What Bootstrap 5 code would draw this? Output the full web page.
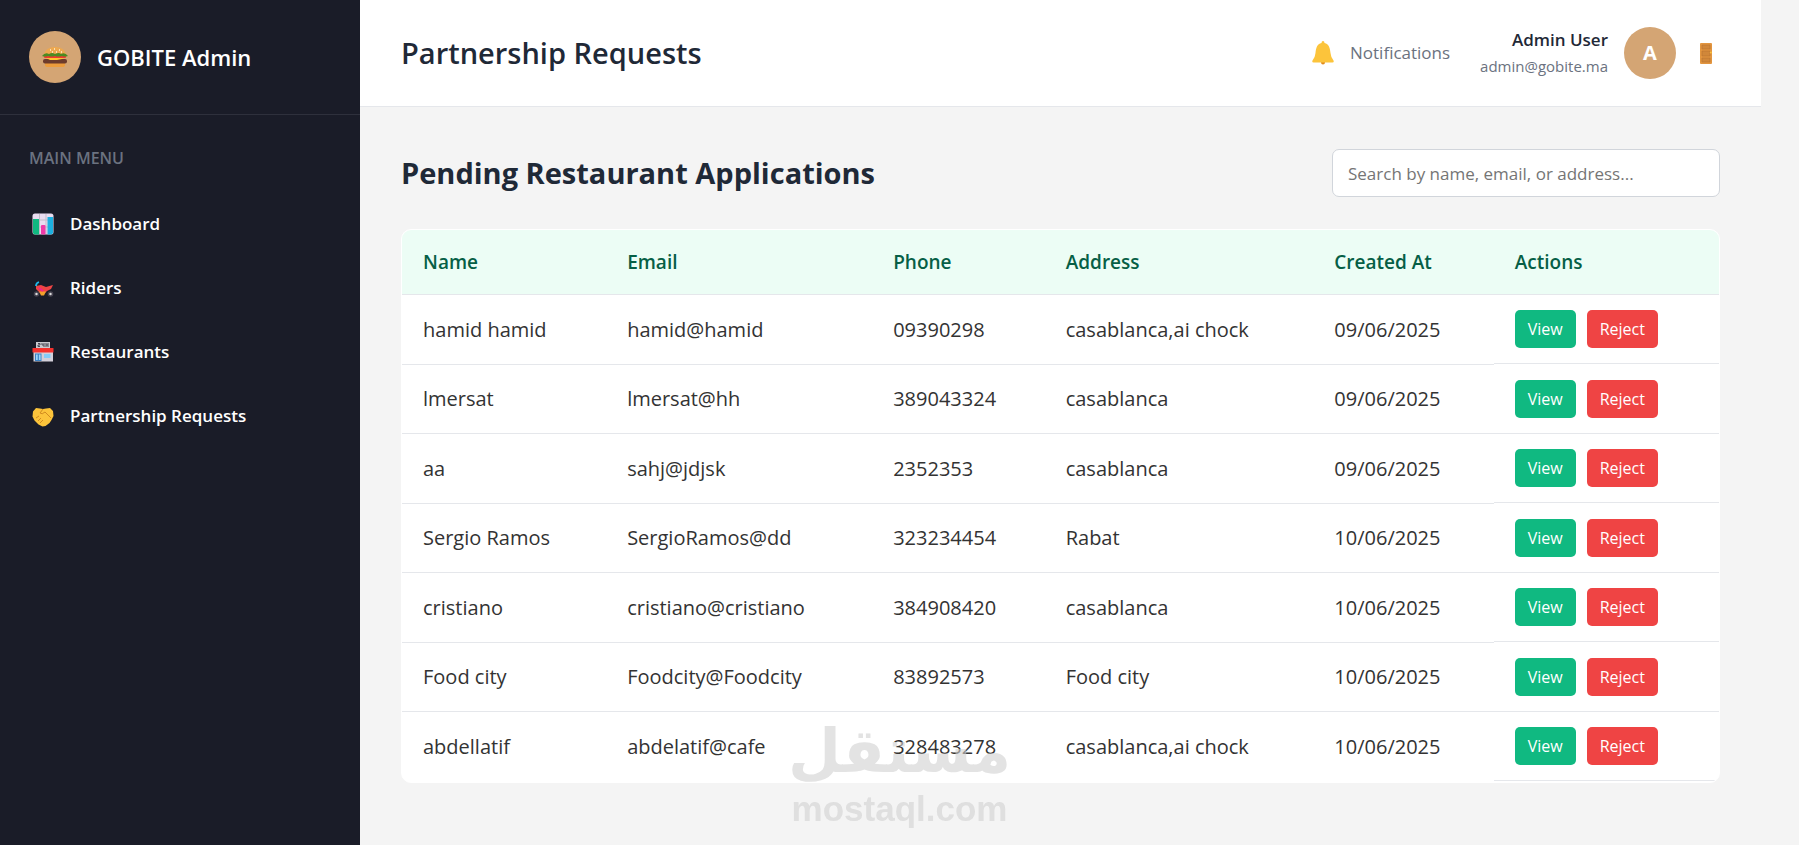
<!DOCTYPE html>
<html lang="en">
<head>
<meta charset="utf-8">
<meta name="viewport" content="width=device-width, initial-scale=1">
<title>GOBITE Admin - Partnership Requests</title>
<link href="https://cdn.jsdelivr.net/npm/bootstrap@5.3.0/dist/css/bootstrap.min.css" rel="stylesheet">
<style>
  body { font-family: "Open Sans", "Noto Sans", sans-serif; background: #f4f4f4; color: #333; }
  .sidebar { width: 360px; background: #1a1c28; color: #fff; }
  .brand { height: 115px; padding: 0 29px; border-bottom: 1px solid #2e303c; font-size: 22px; }
  .disc { width: 52px; height: 52px; background: #d4a574; font-size: 20px; }
  .menu-label { padding: 32px 29px 23px; font-size: 16px; line-height: 22px; color: #6b7280; }
  .menu a { height: 64px; padding: 0 32px; gap: 16px; font-size: 17px; color: #fff; }
  .main-area { padding-right: 38px; }
  .topbar { height: 107px; padding: 0 41px; background: #fff; border-bottom: 1px solid #e5e7eb; color: #1f2937; }
  .topbar h1 { font-size: 29px; }
  .account { gap: 30px; }
  .bell-btn { gap: 16px; font-size: 17px; color: #6b7280; }
  .user-name { font-size: 17px; line-height: 26px; }
  .user-mail { font-size: 15px; line-height: 26px; color: #6b7280; }
  .content { padding: 42px 41px; }
  .content h2 { font-size: 29px; color: #1f2937; }
  .search { width: 388px; height: 48px; padding: 0 15px; font-size: 17px; border: 1px solid #d1d5db; border-radius: 7px; }
  .search::placeholder { color: #757575; }
  .panel { margin-top: 32px; border: 1px solid #fff; border-radius: 10px; background: #fff; overflow: hidden; }
  .requests { table-layout: fixed; border-collapse: separate; border-spacing: 0; font-size: 20px; }
  .requests th { height: 65px; padding: 0 21px; background: #ecfdf5; color: #065f46; font-size: 19px; font-weight: 600; border-bottom: 1px solid #e5e7eb; }
  .requests td { height: 69px; padding: 0 21px; border-bottom: 1px solid #e5e7eb; }
  .requests tbody tr:nth-child(odd) td { height: 70px; }
  .requests td.actions { padding: 0; border: 0; vertical-align: top; }
  .requests tbody tr:last-child td { border-bottom: 0; }
  .action-row { height: 69px; padding: 0 21px; gap: 11px; border-bottom: 1px solid #e5e7eb; }
  .act { height: 38px; padding: 0 13px; border: 0; border-radius: 5px; font-size: 16px; color: #fff; }
  .act-view { background: #10b981; }
  .act-reject { background: #ef4444; }
  .c-name { width: 15.5%; } .c-mail { width: 20.2%; } .c-phone { width: 13.1%; }
  .c-addr { width: 20.4%; } .c-date { width: 13.7%; } .c-act { width: 17.1%; }
  .watermark { position: fixed; left: 50%; bottom: 16px; transform: translateX(-50%); color: #d0d0d0; opacity: .6; pointer-events: none; }
  .watermark .ar { font: bold 61px/76px "DejaVu Sans", sans-serif; }
  .watermark .en { font: bold 35px/40px "Liberation Sans", sans-serif; }
</style>
</head>
<body>
<div class="d-flex min-vh-100">
  <aside class="sidebar flex-shrink-0">
    <div class="brand d-flex align-items-center fw-semibold">
      <span class="disc rounded-circle d-flex align-items-center justify-content-center me-3">
        <svg width="26" height="22" viewBox="0 0 26 22" aria-hidden="true">
          <path d="M2 9C3 3 8 1 13 1s10 2 11 8z" fill="#eda850"/>
          <path d="M8 4h1M12 3h1M17 4h1M10 6h1M14 6h1M19 6h1" stroke="#fff1d0" stroke-width="1.3"/>
          <path d="M3 17h20v2q0 2-3 2H6q-3 0-3-2z" fill="#ec9c3c"/>
          <rect x="1" y="13" width="24" height="4.5" rx="2" fill="#6d3b2b"/>
          <path d="M2 11h22l-4 2-5 1-7 0z" fill="#ffc52f"/>
          <rect x="2" y="9.500" width="22" height="2.500" rx="1" fill="#f03a2e"/>
          <path d="M0 10q3-4 7-2 3-2 6 0 4-2 6 0 4-2 7 2-4 1-6 0-4 1-7 0-4 1-7 0-3 1-6 0z" fill="#4b8b22"/>
        </svg>
      </span>
      <span>GOBITE Admin</span>
    </div>
    <div class="menu-label fw-semibold">MAIN MENU</div>
    <nav class="menu d-flex flex-column fw-semibold">
      <a href="#" class="d-flex align-items-center text-decoration-none">
        <svg width="22" height="22" viewBox="0 0 22 22" aria-hidden="true"><rect x=".5" y=".5" width="21" height="21" rx="2.500" fill="#e9dcf0"/><path d="M7.500 1v20M14 1v20M1 7h20M1 14h20" stroke="#c3bcc9"/><path d="M1 6h6v15.500H3q-2 0-2-2z" fill="#10b981"/><rect x="9" y="12" width="4.500" height="9.500" rx="1" fill="#f03aa8"/><path d="M15.500 4h5.500v15.500q0 2-2 2h-3.500z" fill="#1cb0e0"/></svg>
        <span>Dashboard</span></a>
      <a href="#" class="d-flex align-items-center text-decoration-none">
        <svg width="22" height="22" viewBox="0 0 22 22" aria-hidden="true"><g transform="translate(0 3)"><circle cx="4.500" cy="14" r="2" fill="#ddd" stroke="#45424f" stroke-width="1.600"/><circle cx="18.500" cy="14" r="2" fill="#ddd" stroke="#45424f" stroke-width="1.600"/><path d="M4 6l5-1 5 2 7-2-2 4-4 2-2 2H8L4 9z" fill="#ef4444"/><path d="M7 11.500h7l-2 4H9z" fill="#f2a02b"/><path d="M7 8l4 3" stroke="#f0248c" stroke-width="2"/><path d="M4 6q0-3 3-4" fill="none" stroke="#20b8e6" stroke-width="1.800"/></g></svg>
        <span>Riders</span></a>
      <a href="#" class="d-flex align-items-center text-decoration-none">
        <svg width="22" height="22" viewBox="0 0 22 22" aria-hidden="true"><rect x="4" y="1" width="14" height="6" fill="#c9c9cf"/><path d="M6 2.500h2v1.500H6v1.500h2M10 2v2h2M12 2v4M14 2v4M14 4h2M16 2v4" fill="none" stroke="#4a4a56"/><rect x="1.500" y="9" width="19.500" height="11.500" fill="#d3d0da"/><rect x=".5" y="7" width="21" height="4.500" rx=".5" fill="#f5312d"/><rect x="3" y="12.500" width="6.500" height="7.500" fill="#3b82c4"/><path d="M4 13.500h1.700v5.500H4zM6.900 13.500h1.700v5.500H6.900z" fill="#9ad4fa"/><rect x="12" y="13" width="6.500" height="4" fill="#84cdfa"/></svg>
        <span>Restaurants</span></a>
      <a href="#" class="d-flex align-items-center text-decoration-none">
        <svg width="22" height="22" viewBox="0 0 22 22" aria-hidden="true"><g transform="translate(0 2)"><path d="M4 1l4 .5 3 .5 3-.5 4-.5 3 3 .5 5-2 4-2 3-4 3-3 .5-4-2-4-4-2-4 .5-5z" fill="#fcc43b"/><path d="M11 2L8 6q2 2 5-1l6 6M4 11l3-2M6 14l3-3M8 16l3-3" fill="none" stroke="#d18a1f"/></g></svg>
        <span>Partnership Requests</span></a>
    </nav>
  </aside>

  <main class="main-area flex-grow-1">
    <header class="topbar d-flex align-items-center justify-content-between">
      <h1 class="fw-semibold m-0">Partnership Requests</h1>
      <div class="d-flex align-items-center">
        <div class="account d-flex align-items-center me-3">
          <button type="button" class="bell-btn btn p-0 border-0 d-flex align-items-center">
            <svg width="22" height="24" viewBox="0 0 22 24" aria-hidden="true"><circle cx="11" cy="21.500" r="2" fill="#e08a1c"/><path d="M11 0q1.500 0 1.500 2C17 3 18 7 18.500 12q.5 5 3 7.500.8 2-1 2h-19q-1.800 0-1-2 2.500-2.500 3-7.500C4 7 5 3 9.500 2q0-2 1.500-2z" fill="#fcc43b"/></svg>
            <span>Notifications</span>
          </button>
          <div class="text-end">
            <div class="user-name fw-semibold">Admin User</div>
            <div class="user-mail">admin@gobite.ma</div>
          </div>
        </div>
        <span class="disc rounded-circle text-white fw-bold d-flex align-items-center justify-content-center">A</span>
        <button type="button" class="btn p-0 border-0 ms-4 me-2 d-flex" aria-label="Log out">
          <svg width="12" height="21" viewBox="0 0 12 21" aria-hidden="true"><rect width="12" height="21" rx="1" fill="#e2953f"/><path d="M2 2h8v4H2zM2 8h8v5H2zM2 15h8v4H2z" fill="#d0873a" stroke="#b97430" stroke-width=".6"/><circle cx="10.800" cy="9.500" r="1" fill="#fcc43b"/></svg>
        </button>
      </div>
    </header>

    <section class="content">
      <div class="d-flex align-items-center justify-content-between">
        <h2 class="fw-bold m-0">Pending Restaurant Applications</h2>
        <input type="search" class="search" placeholder="Search by name, email, or address..." aria-label="Search requests">
      </div>
      <div class="panel">
        <table class="requests w-100 align-middle">
          <colgroup><col class="c-name"><col class="c-mail"><col class="c-phone"><col class="c-addr"><col class="c-date"><col class="c-act"></colgroup>
          <thead><tr><th>Name</th><th>Email</th><th>Phone</th><th>Address</th><th>Created At</th><th>Actions</th></tr></thead>
          <tbody>
            <tr><td>hamid hamid</td><td>hamid@hamid</td><td>09390298</td><td>casablanca,ai chock</td><td>09/06/2025</td><td class="actions"><div class="action-row d-flex align-items-center"><button type="button" class="act act-view">View</button><button type="button" class="act act-reject">Reject</button></div></td></tr>
            <tr><td>lmersat</td><td>lmersat@hh</td><td>389043324</td><td>casablanca</td><td>09/06/2025</td><td class="actions"><div class="action-row d-flex align-items-center"><button type="button" class="act act-view">View</button><button type="button" class="act act-reject">Reject</button></div></td></tr>
            <tr><td>aa</td><td>sahj@jdjsk</td><td>2352353</td><td>casablanca</td><td>09/06/2025</td><td class="actions"><div class="action-row d-flex align-items-center"><button type="button" class="act act-view">View</button><button type="button" class="act act-reject">Reject</button></div></td></tr>
            <tr><td>Sergio Ramos</td><td>SergioRamos@dd</td><td>323234454</td><td>Rabat</td><td>10/06/2025</td><td class="actions"><div class="action-row d-flex align-items-center"><button type="button" class="act act-view">View</button><button type="button" class="act act-reject">Reject</button></div></td></tr>
            <tr><td>cristiano</td><td>cristiano@cristiano</td><td>384908420</td><td>casablanca</td><td>10/06/2025</td><td class="actions"><div class="action-row d-flex align-items-center"><button type="button" class="act act-view">View</button><button type="button" class="act act-reject">Reject</button></div></td></tr>
            <tr><td>Food city</td><td>Foodcity@Foodcity</td><td>83892573</td><td>Food city</td><td>10/06/2025</td><td class="actions"><div class="action-row d-flex align-items-center"><button type="button" class="act act-view">View</button><button type="button" class="act act-reject">Reject</button></div></td></tr>
            <tr><td>abdellatif</td><td>abdelatif@cafe</td><td>328483278</td><td>casablanca,ai chock</td><td>10/06/2025</td><td class="actions"><div class="action-row d-flex align-items-center"><button type="button" class="act act-view">View</button><button type="button" class="act act-reject">Reject</button></div></td></tr>
          </tbody>
        </table>
      </div>
    </section>
  </main>
</div>
<div class="watermark text-center">
  <div class="ar" lang="ar" dir="rtl">مستقل</div>
  <div class="en">mostaql.com</div>
</div>
<script src="https://cdn.jsdelivr.net/npm/bootstrap@5.3.0/dist/js/bootstrap.bundle.min.js"></script>
</body>
</html>
